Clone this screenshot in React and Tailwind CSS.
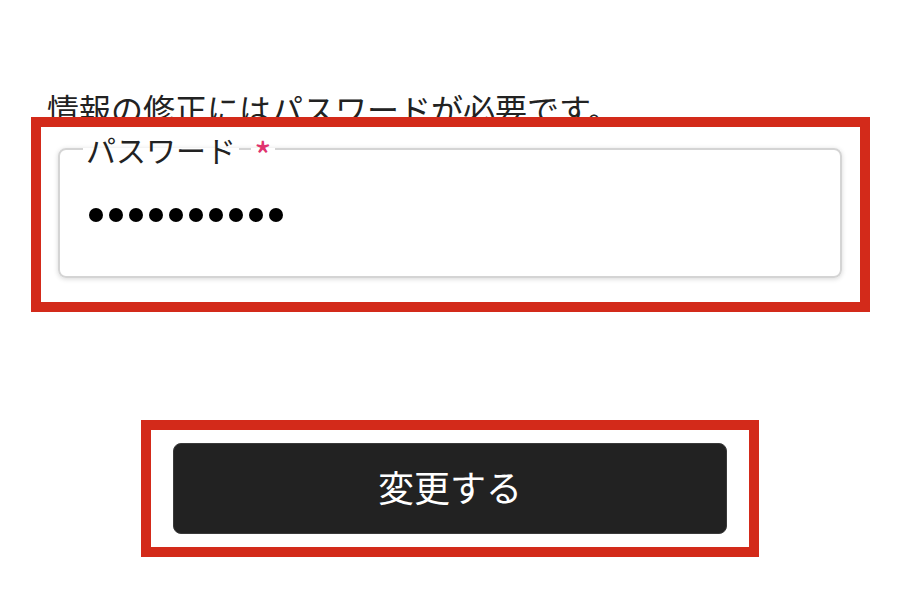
export default function App() {
  const dots = Array.from({ length: 10 });
  return (
    <div className="w-[900px] h-[600px] bg-white overflow-hidden" style={{ fontFamily: '"Noto Sans CJK JP", "Noto Sans", sans-serif' }}>
      <div className="pt-[92px] pl-[47px] text-[32px] leading-none text-[#222] whitespace-nowrap">
        情報の修正にはパスワードが必要です。
      </div>
      <div className="relative z-10 ml-[31px] mt-[-7px] w-[839px] h-[195px] border-[10px] border-[#d32a1a] bg-white pl-[17px] pt-[3px]">
        <fieldset className="w-[784px] h-[148px] rounded-lg border-2 border-[#d4d4d4] shadow-[0_1px_5px_rgba(0,0,0,0.16)] bg-white">
          <legend className="ml-[23px] flex items-center text-[30px] leading-none text-[#222]">
            <span className="px-[3px]">パスワード</span>
            <span className="w-[12px] h-[2px] bg-[#d4d4d4]" />
            <span className="px-[3px] text-[38px] leading-none text-[#e0336e] translate-y-[6px]">*</span>
          </legend>
          <div className="flex gap-[6px] pl-[29px] pt-[40px]">
            {dots.map((_, i) => (
              <div key={i} className="w-[14px] h-[14px] rounded-full bg-black" />
            ))}
          </div>
        </fieldset>
      </div>
      <div className="mt-[108px] mx-auto w-[618px] h-[137px] border-[10px] border-[#d32a1a] px-[22px] pt-[13px]">
        <button className="w-full h-[91px] rounded-lg bg-[#222222] border border-[#3a3a3a] text-white text-[36px] leading-none flex items-center justify-center pb-[6px]">
          変更する
        </button>
      </div>
    </div>
  );
}
